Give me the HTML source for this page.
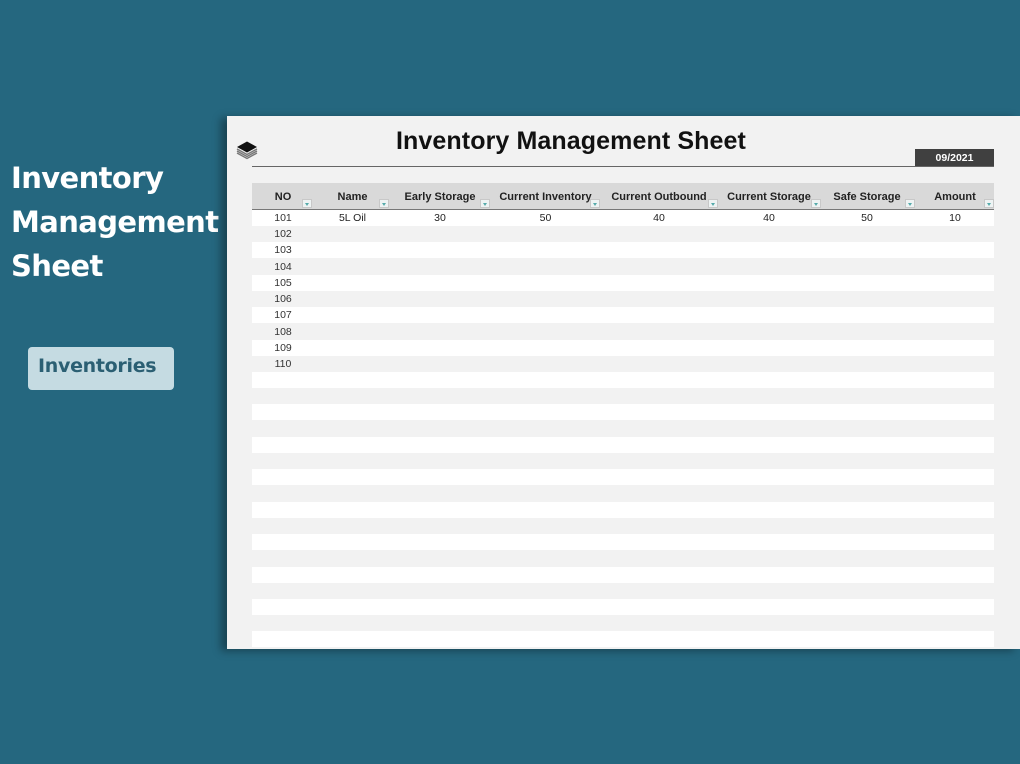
<!DOCTYPE html>
<html><head><meta charset="utf-8"><style>
*{margin:0;padding:0;box-sizing:border-box}
body{width:1020px;height:764px;background:#25677f;position:relative;overflow:hidden;font-family:"Liberation Sans",Arial,sans-serif}
.lt{position:absolute;left:11px;top:156px;color:#fff;font-family:"DejaVu Sans","Liberation Sans",sans-serif;font-weight:bold;font-size:29px;line-height:44px;letter-spacing:-0.6px}
.btn{position:absolute;left:28px;top:347px;width:146px;height:43px;background:#c5dbe2;border-radius:4px;color:#2b5f73;font-family:"DejaVu Sans","Liberation Sans",sans-serif;font-weight:bold;font-size:19px;line-height:38px;padding-left:10px;letter-spacing:-0.3px}
.panel{position:absolute;left:227px;top:116px;width:793px;height:533px;background:#f2f2f2;box-shadow:-6px 2px 8px rgba(0,0,0,0.35)}
.title{position:absolute;left:396px;top:127px;font-size:25px;font-weight:bold;color:#111;letter-spacing:0.1px}
.hline{position:absolute;left:252px;top:166px;width:742px;height:1px;background:#666}
.date{position:absolute;left:915px;top:149px;width:79px;height:17px;background:#404040;color:#fff;font-size:10.5px;font-weight:bold;text-align:center;line-height:18px}
.hdr{position:absolute;left:252px;top:183px;width:742px;height:27px;background:#d9d9d9;border-bottom:1px solid #777}
.c{position:absolute;font-size:11px;text-align:center;color:#222}
.h{font-weight:bold;top:191px}
.dd{position:absolute;width:10px;height:9px;background:#eef3f3;border:1px solid #c8c8c8;top:199px}
.dd:after{content:"";position:absolute;left:2px;top:3px;border:2px solid transparent;border-top:3px solid #5aa;}
.row{position:absolute;left:252px;width:742px;height:16px;background:#fff}
.n{position:absolute;left:252px;width:62px;text-align:center;font-size:10.5px;color:#333}
</style></head><body>
<div class="lt">Inventory<br>Management<br>Sheet</div>
<div class="btn">Inventories</div>
<div class="panel"></div>
<svg style="position:absolute;left:236px;top:140px" width="22" height="22" viewBox="0 0 22 22">
<path d="M1 13 L11 18.5 L21 13" fill="none" stroke="#777" stroke-width="1.4"/>
<path d="M1 11 L11 16.5 L21 11" fill="none" stroke="#777" stroke-width="1.4"/>
<path d="M1 9 L11 14.5 L21 9" fill="none" stroke="#777" stroke-width="1.4"/>
<path d="M1 7 L11 1.5 L21 7 L11 12.5Z" fill="#111"/>
</svg>
<div class="title">Inventory Management Sheet</div>
<div class="hline"></div>
<div class="date">09/2021</div>
<div class="hdr"></div>
<div class="c h" style="left:252px;width:62px">NO</div>
<div class="c h" style="left:315px;width:75px">Name</div>
<div class="c h" style="left:390px;width:100px">Early Storage</div>
<div class="c h" style="left:492px;width:107px">Current Inventory</div>
<div class="c h" style="left:601px;width:116px">Current Outbound</div>
<div class="c h" style="left:719px;width:100px">Current Storage</div>
<div class="c h" style="left:817px;width:100px">Safe Storage</div>
<div class="c h" style="left:916px;width:78px">Amount</div>
<div class="dd" style="left:302px"></div><div class="dd" style="left:379px"></div><div class="dd" style="left:480px"></div><div class="dd" style="left:590px"></div><div class="dd" style="left:708px"></div><div class="dd" style="left:811px"></div><div class="dd" style="left:905px"></div><div class="dd" style="left:984px"></div>
<div class="row" style="top:210px"></div>
<div class="row" style="top:242px"></div>
<div class="row" style="top:275px"></div>
<div class="row" style="top:307px"></div>
<div class="row" style="top:340px"></div>
<div class="row" style="top:372px"></div>
<div class="row" style="top:404px"></div>
<div class="row" style="top:437px"></div>
<div class="row" style="top:469px"></div>
<div class="row" style="top:502px"></div>
<div class="row" style="top:534px"></div>
<div class="row" style="top:567px"></div>
<div class="row" style="top:599px"></div>
<div class="row" style="top:631px"></div>
<div class="n" style="top:212px">101</div>
<div class="n" style="top:228px">102</div>
<div class="n" style="top:244px">103</div>
<div class="n" style="top:261px">104</div>
<div class="n" style="top:277px">105</div>
<div class="n" style="top:293px">106</div>
<div class="n" style="top:309px">107</div>
<div class="n" style="top:326px">108</div>
<div class="n" style="top:342px">109</div>
<div class="n" style="top:358px">110</div>
<div class="c" style="top:212px;left:315px;width:75px;font-size:10.5px">5L Oil</div>
<div class="c" style="top:212px;left:390px;width:100px;font-size:10.5px">30</div>
<div class="c" style="top:212px;left:492px;width:107px;font-size:10.5px">50</div>
<div class="c" style="top:212px;left:601px;width:116px;font-size:10.5px">40</div>
<div class="c" style="top:212px;left:719px;width:100px;font-size:10.5px">40</div>
<div class="c" style="top:212px;left:817px;width:100px;font-size:10.5px">50</div>
<div class="c" style="top:212px;left:916px;width:78px;font-size:10.5px">10</div>
</body></html>
